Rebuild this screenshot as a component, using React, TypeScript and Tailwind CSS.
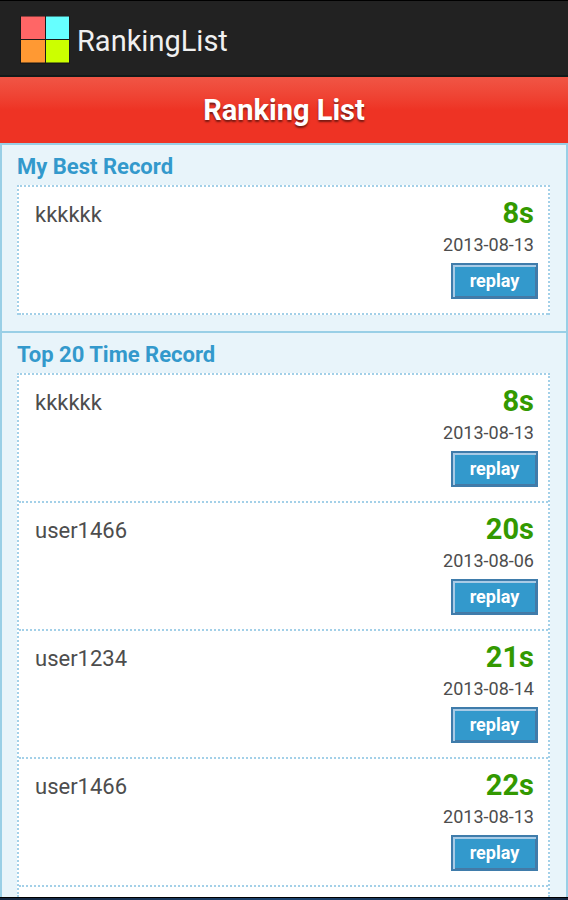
interface RankRecord {
  id: number;
  name: string;
  time: string;
  date: string;
}

interface RecordSectionProps {
  id: string;
  title: string;
  records: RankRecord[];
  // Stretches the list down to the bottom of the screen
  fill?: boolean;
}

const bestRecords: RankRecord[] = [
  { id: 1, name: 'kkkkkk', time: '8s', date: '2013-08-13' },
];

const topRecords: RankRecord[] = [
  { id: 1, name: 'kkkkkk', time: '8s', date: '2013-08-13' },
  { id: 2, name: 'user1466', time: '20s', date: '2013-08-06' },
  { id: 3, name: 'user1234', time: '21s', date: '2013-08-14' },
  { id: 4, name: 'user1466', time: '22s', date: '2013-08-13' },
];

function AppLogo() {
  return (
    <svg width="50" height="48" viewBox="0 0 50 48" aria-hidden="true">
      <rect width="50" height="48" fill="#191919" />
      <rect x="1" y="0.5" width="24" height="22.5" fill="#ff6666" />
      <rect x="26" y="0.5" width="23" height="22.5" fill="#66ffff" />
      <rect x="1" y="24" width="24" height="22.5" fill="#ff9933" />
      <rect x="26" y="24" width="23" height="22.5" fill="#ccff00" />
    </svg>
  );
}

function RecordRow({ record }: { record: RankRecord }) {
  return (
    <li className="flex h-32 items-start justify-between border-b-2 border-dotted border-[#a3d0e8] pt-1.5 pr-2.5 pl-4">
      <p className="pt-1.5 text-[22px] leading-8 text-[#4d4d4d]">{record.name}</p>
      <div className="flex flex-col items-end">
        <p className="pr-1 text-[29px] leading-10 font-bold text-[#339900]">{record.time}</p>
        <p className="pr-1 text-[18px] leading-6 text-[#4d4d4d]">{record.date}</p>
        <button
          type="button"
          className="mt-1.5 h-9 w-[87px] border-2 border-[#3f7cab] bg-[#3399cc] text-[18px] leading-5 font-bold text-white shadow-[inset_2px_2px_0_#a9cbe6,inset_-1px_-1px_0_#4679a4]"
        >
          replay
        </button>
      </div>
    </li>
  );
}

function RecordSection({ id, title, records, fill }: RecordSectionProps) {
  return (
    <section
      aria-labelledby={id}
      className={
        fill ? 'flex flex-1 flex-col pt-1 pr-4 pl-[15px]' : 'border-b-2 border-[#99cfe6] pt-1 pr-4 pb-4 pl-[15px]'
      }
    >
      <h2 id={id} className="h-9 pt-0.5 text-[22px] leading-8 font-bold text-[#3399cc]">
        {title}
      </h2>
      <ul
        className={
          fill
            ? 'flex-1 border-2 border-b-0 border-dotted border-[#a3d0e8] bg-white'
            : 'border-2 border-b-0 border-dotted border-[#a3d0e8] bg-white'
        }
      >
        {records.map((record) => (
          <RecordRow key={record.id} record={record} />
        ))}
      </ul>
    </section>
  );
}

export default function App() {
  return (
    <div className="flex min-h-screen flex-col border-t border-black bg-[#e8f4fa] font-[Roboto,sans-serif]">
      <header className="flex h-19 items-center gap-[7px] border-b-2 border-[#111a1a] bg-[#222222] px-5 pt-1">
        <AppLogo />
        <span className="pt-0.5 text-[29px] leading-9 text-[#f0f0f0]">RankingList</span>
      </header>

      <h1 className="h-[66px] bg-linear-to-b from-[#f05545] to-[#ee3324] to-50% text-center text-[29px] leading-[66px] font-bold text-white [text-shadow:0_2px_2px_rgba(0,0,0,0.5)]">
        Ranking List
      </h1>

      <main className="flex flex-1 flex-col border-2 border-b-0 border-[#99cfe6]">
        <RecordSection id="best-record" title="My Best Record" records={bestRecords} />
        <RecordSection id="top-records" title="Top 20 Time Record" records={topRecords} fill />
      </main>

      <div className="h-[3px] border-t border-black bg-linear-to-r from-[#14263f] via-[#1b4470] to-[#14263f]" />
    </div>
  );
}
